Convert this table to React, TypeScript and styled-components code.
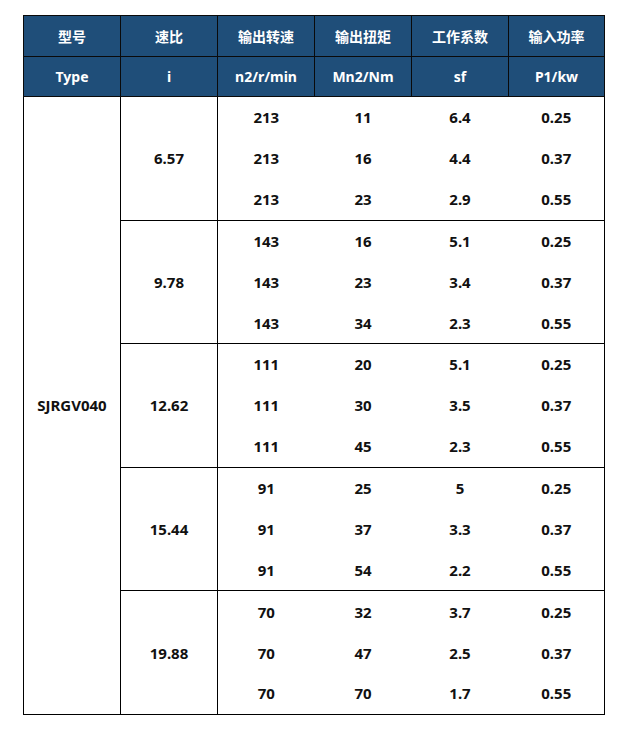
import React from "react";
import styled, { createGlobalStyle } from "styled-components";

const GlobalStyle = createGlobalStyle`
  body {
    margin: 0;
    background: #fff;
    font-family: "Noto Sans", "Noto Sans CJK SC", sans-serif;
  }
`;

interface Group {
  ratio: string;
  rows: [string, string, string, string][];
}

const groups: Group[] = [
  {
    ratio: "6.57",
    rows: [
      ["213", "11", "6.4", "0.25"],
      ["213", "16", "4.4", "0.37"],
      ["213", "23", "2.9", "0.55"],
    ],
  },
  {
    ratio: "9.78",
    rows: [
      ["143", "16", "5.1", "0.25"],
      ["143", "23", "3.4", "0.37"],
      ["143", "34", "2.3", "0.55"],
    ],
  },
  {
    ratio: "12.62",
    rows: [
      ["111", "20", "5.1", "0.25"],
      ["111", "30", "3.5", "0.37"],
      ["111", "45", "2.3", "0.55"],
    ],
  },
  {
    ratio: "15.44",
    rows: [
      ["91", "25", "5", "0.25"],
      ["91", "37", "3.3", "0.37"],
      ["91", "54", "2.2", "0.55"],
    ],
  },
  {
    ratio: "19.88",
    rows: [
      ["70", "32", "3.7", "0.25"],
      ["70", "47", "2.5", "0.37"],
      ["70", "70", "1.7", "0.55"],
    ],
  },
];

const cnHead = ["型号", "速比", "输出转速", "输出扭矩", "工作系数", "输入功率"];
const enHead = ["Type", "i", "n2/r/min", "Mn2/Nm", "sf", "P1/kw"];

const App: React.FC = () => {
  return (
    <>
      <GlobalStyle />
      <Page>
        <SpecTable>
          <colgroup>
            {cnHead.map((_, i) => (
              <col key={i} style={{ width: i === 5 ? 96 : 97 }} />
            ))}
          </colgroup>
          <thead>
            <HeadRow $height={41}>
              {cnHead.map((h) => (
                <HeadCell key={h}>{h}</HeadCell>
              ))}
            </HeadRow>
            <HeadRow $height={40}>
              {enHead.map((h) => (
                <HeadCell key={h}>{h}</HeadCell>
              ))}
            </HeadRow>
          </thead>
          <tbody>
            {groups.map((g, gi) =>
              g.rows.map((r, ri) => {
                const first = ri === 0;
                const last = gi === groups.length - 1 && ri === 2;
                return (
                  <DataRow key={`${gi}-${ri}`}>
                    {gi === 0 && ri === 0 && (
                      <ModelCell rowSpan={15}>SJRGV040</ModelCell>
                    )}
                    {first && <RatioCell rowSpan={3}>{g.ratio}</RatioCell>}
                    {r.map((v, ci) => (
                      <ValueCell
                        key={ci}
                        $top={first}
                        $bottom={last}
                        $edge={ci === 3}
                      >
                        {v}
                      </ValueCell>
                    ))}
                  </DataRow>
                );
              })
            )}
          </tbody>
        </SpecTable>
      </Page>
    </>
  );
};

export default App;

const Page = styled.div`
  padding: 15px 0 0 23px;
`;

const SpecTable = styled.table`
  border-collapse: collapse;
  table-layout: fixed;
  width: 580px;
  font-weight: 700;
  font-size: 15px;
  color: #111;
`;

const HeadRow = styled.tr<{ $height: number }>`
  height: ${({ $height }) => $height}px;
  background: #1f4e79;
`;

const HeadCell = styled.th`
  border: 1px solid #0a0a0a;
  color: #fff;
  font-size: 14px;
  font-weight: 700;
  text-align: center;
  padding: 0;
`;

const DataRow = styled.tr`
  height: 41.2px;
`;

const ModelCell = styled.td`
  border: 1px solid #000;
  text-align: center;
  padding: 0;
`;

const RatioCell = styled.td`
  border: 1px solid #000;
  text-align: center;
  padding: 0;
`;

/* tick marks hang below the bottom rule at each column boundary */
const ValueCell = styled.td<{ $top: boolean; $bottom: boolean; $edge: boolean }>`
  position: relative;
  text-align: center;
  padding: 0;
  border-top: ${({ $top }) => ($top ? "1px solid #000" : "none")};
  border-bottom: ${({ $bottom }) => ($bottom ? "1px solid #000" : "none")};
  border-right: ${({ $edge }) => ($edge ? "1px solid #000" : "none")};

  &::after {
    content: "";
    display: ${({ $bottom, $edge }) => ($bottom && !$edge ? "block" : "none")};
    position: absolute;
    right: 0;
    bottom: -4px;
    width: 1px;
    height: 4px;
    background: #000;
  }
`;
